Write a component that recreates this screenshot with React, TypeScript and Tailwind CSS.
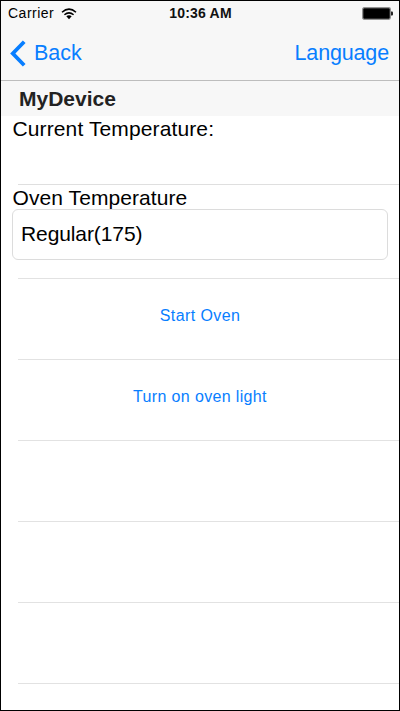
const emptyRows = [0, 1, 2, 3];

export default function App() {
  return (
    <div className="flex h-[711px] w-[400px] flex-col overflow-hidden border border-black bg-white font-['Liberation_Sans',sans-serif] text-black">
      <header className="flex h-[80px] shrink-0 flex-col border-b border-[#bdbdbd] bg-[#f7f7f7]">
        <div className="grid h-[25px] grid-cols-3 items-center pr-[6px] pl-[7px] text-[14px]">
          <div className="flex items-center gap-[6px]">
            <span className="w-[47px] whitespace-nowrap tracking-[0.5px]">Carrier</span>
            <svg width="16" height="12" viewBox="0 0 16 12" fill="none" stroke="black" strokeWidth="1.5">
              <path d="M1 4.2Q8 -1.9 15 4.2M3.4 6.8Q8 2.9 12.6 6.8" />
              <path d="M5.3 8.3Q8 6.2 10.7 8.3L8 11.2Z" fill="black" stroke="none" />
            </svg>
          </div>
          <span className="text-center font-bold tracking-[0.2px] whitespace-nowrap text-[#111]">10:36 AM</span>
          <svg className="justify-self-end" width="31" height="13" viewBox="0 0 31 13">
            <rect x=".6" y=".6" width="27.8" height="11.8" rx="1.8" fill="#222" stroke="#929292" strokeWidth="1.2" />
            <rect x="1.8" y="1.8" width="25.4" height="9.4" rx=".5" />
            <path d="M29 4.5h1q1 0 1 1v2q0 1-1 1h-1z" fill="#222" />
          </svg>
        </div>
        <nav className="flex h-[54px] items-center justify-between pr-[10px] pl-[9px] text-[21.5px] text-[#087eff]">
          <button className="flex items-center gap-[8px]">
            <svg width="16" height="27" viewBox="0 0 16 27" fill="none" stroke="currentColor" strokeWidth="3.8">
              <path d="M14.2 1.7L2.8 13.5L14.2 25.3" />
            </svg>
            <span className="pt-px">Back</span>
          </button>
          <button className="pt-px tracking-[-0.15px]">Language</button>
        </nav>
      </header>
      <h2 className="flex h-[35px] shrink-0 items-center bg-[#f7f7f7] pl-[18px] text-[21px] font-bold text-[#222]">MyDevice</h2>
      <main>
        <div className="h-[68px] pl-[11.5px] text-[21px] leading-[26px] tracking-[0.12px]">Current Temperature:</div>
        <div className="ml-[17px] h-px bg-[#dfdfdf]" />
        <div className="h-[93px] px-[11px] text-[21px] leading-[25px]">
          <div className="h-[24px] pl-[0.5px] tracking-[0.08px]">Oven Temperature</div>
          <div className="flex h-[51px] items-center rounded-[6px] border border-[#dcdcdc] pb-[2px] pl-2 tracking-[-0.1px]">Regular(175)</div>
        </div>
        <div className="ml-[17px] text-[16px] text-[#087eff]">
          <button className="flex h-[81px] w-full items-center justify-center border-t border-[#e2e2e2] pr-[17px] pb-[6px] tracking-[0.4px]">Start Oven</button>
          <button className="flex h-[81px] w-full items-center justify-center border-t border-[#e2e2e2] pr-[17px] pb-[6px] tracking-[0.35px]">Turn on oven light</button>
          {emptyRows.map((row) => <div key={row} className="h-[81px] border-t border-[#e2e2e2]" />)}
        </div>
      </main>
    </div>
  );
}
